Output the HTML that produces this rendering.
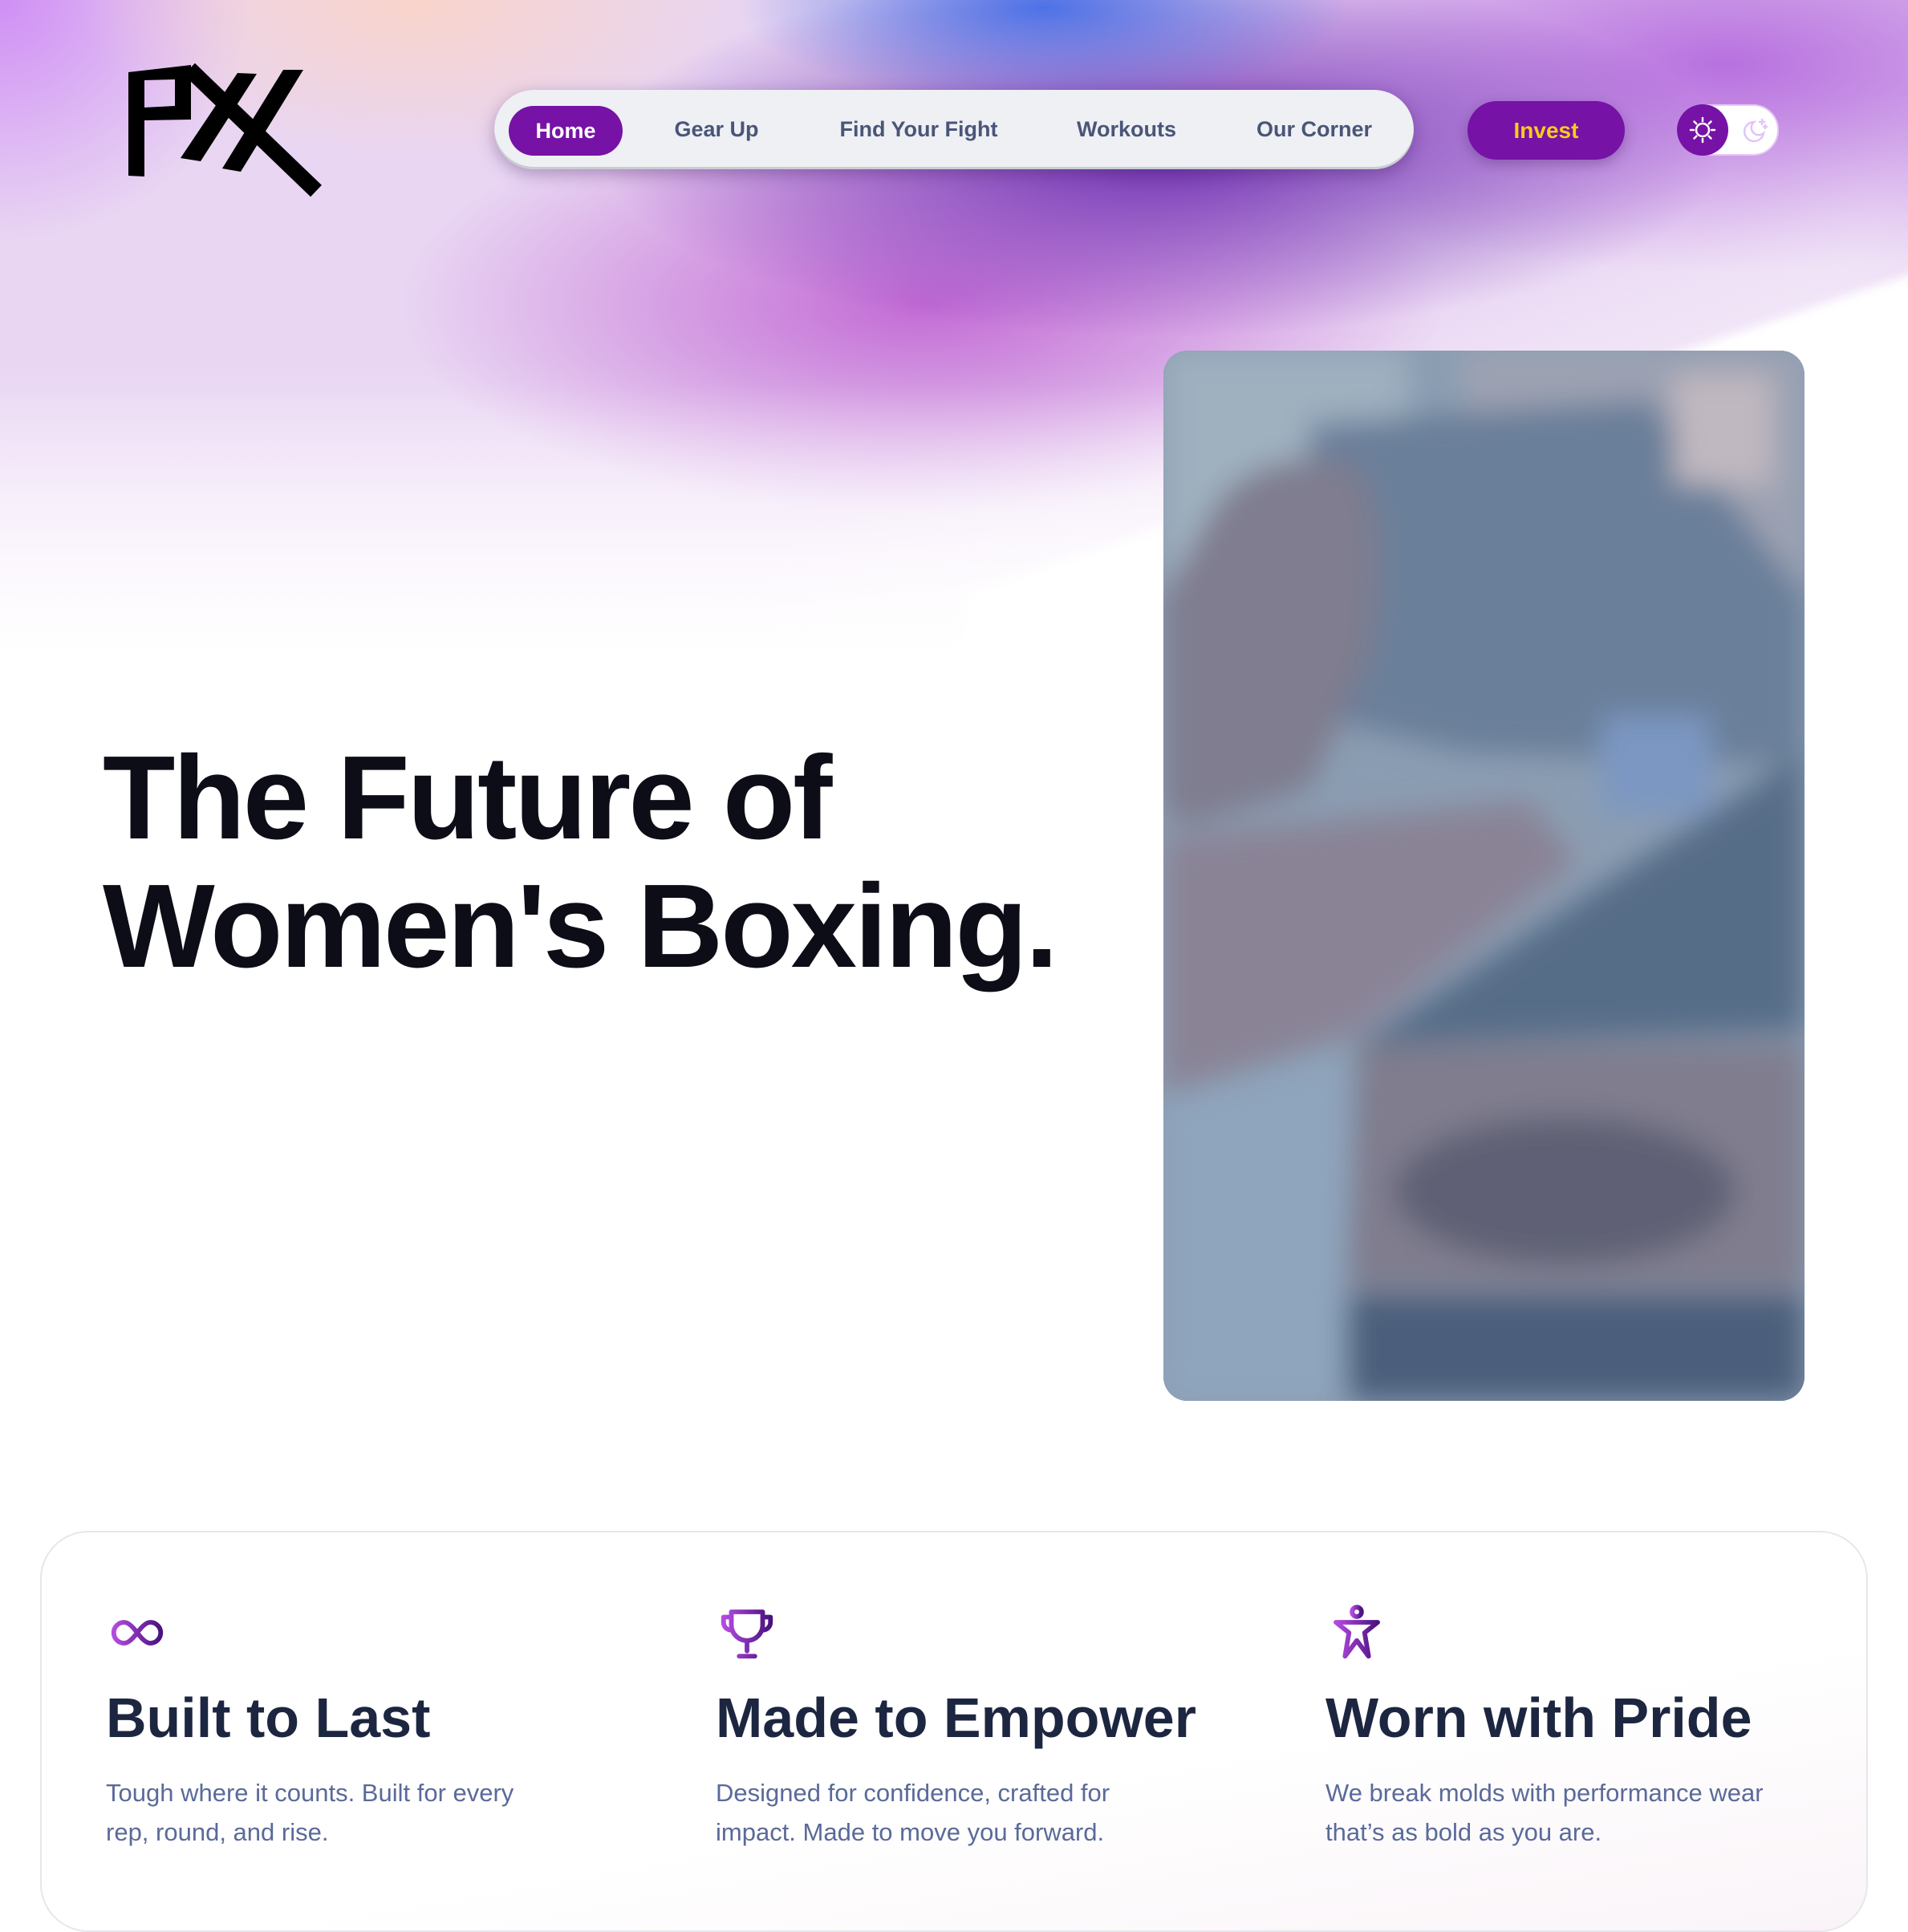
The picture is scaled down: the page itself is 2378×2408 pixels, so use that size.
<!DOCTYPE html>
<html><head><meta charset="utf-8">
<style>
*{margin:0;padding:0;box-sizing:border-box}
html,body{width:2378px;height:2332px;overflow:hidden;background:#fff;font-family:"Liberation Sans",sans-serif}
.bg{position:absolute;left:0;top:0;width:2378px;height:1000px;
background:
radial-gradient(ellipse 380px 120px at 1300px 10px, rgba(70,110,230,.95), rgba(70,110,230,0) 100%),
radial-gradient(ellipse 700px 230px at 1450px 190px, rgba(105,40,175,.95), rgba(105,40,175,0) 100%),
radial-gradient(ellipse 650px 260px at 1150px 380px, rgba(185,80,205,.8), rgba(185,80,205,0) 100%),
radial-gradient(ellipse 700px 260px at 2150px 80px, rgba(175,95,220,.85), rgba(175,95,220,0) 100%),
radial-gradient(ellipse 420px 200px at 520px 0px, rgba(250,212,200,.95), rgba(250,212,200,0) 100%),
radial-gradient(ellipse 320px 300px at 0px 0px, rgba(205,135,245,.9), rgba(205,135,245,0) 100%),
linear-gradient(180deg,#e8d5f2 0%,#e9d6f3 45%,#f4e8f9 70%,#fff 100%);}
.fade{position:absolute;left:0;top:480px;width:2378px;height:520px;background:linear-gradient(180deg,rgba(255,255,255,0),#fff 65%)}
.nav{position:absolute;left:616px;top:112px;width:1146px;height:99px;border-radius:50px;background:#eef0f4;box-shadow:0 6px 20px rgba(60,20,90,.35), inset 0 -3px 0 #c9ccd3;}
.nav span{position:absolute;top:0;line-height:99px;font-size:27px;font-weight:bold;color:#4a5578;transform:translateX(-50%);white-space:nowrap}
.home{position:absolute;left:634px;top:132px;width:142px;height:62px;border-radius:31px;background:#7612a6;color:#fff;font-size:27px;font-weight:bold;text-align:center;line-height:62px}
.invest{position:absolute;left:1829px;top:126px;width:196px;height:73px;border-radius:37px;background:#7612a6;color:#f8cc1a;font-size:28px;font-weight:bold;text-align:center;line-height:73px;box-shadow:0 6px 16px rgba(60,20,90,.3)}
.tog{position:absolute;left:2090px;top:130px;width:127px;height:64px;border-radius:32px;background:#fff;border:2px solid #e5c8f5}
.tog .k{position:absolute;left:-2px;top:-2px;width:64px;height:64px;border-radius:50%;background:#7612a6}
h1{position:absolute;left:128px;top:915px;font-size:148px;line-height:160px;font-weight:bold;color:#0c0d16;letter-spacing:-3px;white-space:nowrap}
.img{position:absolute;left:1450px;top:437px;width:799px;height:1309px;border-radius:30px;overflow:hidden;background:#8a9bb0}
.card{position:absolute;left:50px;top:1908px;width:2278px;height:500px;border-radius:60px;border:2px solid #e6e7ec;background:linear-gradient(170deg,#fff 60%,#faf4f8 100%)}
.col{position:absolute;top:0}
.col svg{position:absolute;top:86px}
.col h2{position:absolute;top:186px;font-size:70px;font-weight:bold;color:#1d2640;white-space:nowrap;line-height:90px}
.col p{position:absolute;top:300px;width:560px;font-size:31px;line-height:49px;color:#5a6a99}
</style></head><body>
<div class="bg"></div>
<svg style="position:absolute;left:0;top:0" width="2378" height="1000">
<defs><filter id="wb" x="-10%" y="-10%" width="120%" height="120%"><feGaussianBlur stdDeviation="6"/></filter>
<filter id="wb2"><feGaussianBlur stdDeviation="60"/></filter></defs>
<polygon points="2400,335 1200,740 1200,1000 2400,1000" fill="#fff" filter="url(#wb)"/>
<polygon points="2400,200 1100,700 900,1000 2400,1000" fill="#fff" opacity=".35" filter="url(#wb2)"/>
</svg>
<div class="fade"></div>

<svg style="position:absolute;left:0;top:0" width="420" height="260">
<path fill="#000" fill-rule="evenodd" d="M160 90 L238 81 L238 149 L180 150 L180 220 L160 219 Z M180 100 L218 99 L218 132 L180 134 Z"/>
<path d="M236 86 L394 238" stroke="#000" stroke-width="20"/>
<polygon points="225,197 250,201 320,92 296,91" fill="#000"/>
<polygon points="277,210 300,214 378,87 353,87" fill="#000"/>
</svg>

<div class="nav">
<span style="left:277px">Gear Up</span>
<span style="left:529px">Find Your Fight</span>
<span style="left:788px">Workouts</span>
<span style="left:1022px">Our Corner</span>
</div>
<div class="home">Home</div>
<div class="invest">Invest</div>
<div class="tog"><div class="k">
<svg width="64" height="64" viewBox="0 0 64 64"><g stroke="#fff" stroke-width="2.5" fill="none" stroke-linecap="round"><circle cx="32" cy="32" r="8"/><path d="M32 17v4M32 43v4M17 32h4M43 32h4M21.5 21.5l2.8 2.8M39.7 39.7l2.8 2.8M21.5 42.5l2.8-2.8M39.7 24.3l2.8-2.8"/></g></svg></div>
<svg style="position:absolute;left:64px;top:0" width="62" height="62" viewBox="0 0 62 62"><g stroke="#e3c4f5" stroke-width="2.5" fill="none" stroke-linecap="round"><path d="M30 20a12 12 0 1 0 12 14a9 9 0 0 1-12-14z"/><path d="M40 17v6M37 20h6M44 24v4M42 26h4"/></g></svg>
</div>

<h1>The Future of<br>Women's Boxing.</h1>

<div class="img">
<svg width="799" height="1309" viewBox="0 0 527 863" preserveAspectRatio="none">
<defs><filter id="b" x="-20%" y="-20%" width="140%" height="140%"><feGaussianBlur stdDeviation="12"/></filter></defs>
<rect width="527" height="863" fill="#8b9db2"/>
<g filter="url(#b)">
<rect x="0" y="0" width="200" height="300" fill="#9fb0bf"/>
<path d="M240 0 H527 V260 H300 Z" fill="#9da2b2"/>
<path d="M120 60 L400 40 L527 200 L527 340 L250 330 L120 300 Z" fill="#6a7f9a"/>
<path d="M30 150 Q60 80 150 90 Q190 110 170 250 L120 360 L20 390 L0 380 V200 Z" fill="#7f7d8f"/>
<path d="M0 400 L300 370 L340 420 L160 560 L0 610 Z" fill="#8a8396"/>
<path d="M160 570 L527 330 L527 560 L160 570 Z" fill="#566d88"/>
<path d="M160 570 H527 V770 H150 Z" fill="#7f7d8e"/>
<ellipse cx="330" cy="690" rx="140" ry="60" fill="#5e6075"/>
<path d="M150 775 H527 V863 H140 Z" fill="#4b5e7b"/>
<path d="M0 620 L150 580 L150 863 H0 Z" fill="#8fa5bd"/>
<rect x="360" y="300" width="90" height="80" fill="#7b97c2"/>
<rect x="420" y="20" width="80" height="90" fill="#c0b8c0"/>
</g>
</svg>
</div>

<div class="card">
<div class="col" style="left:80px">
<svg width="78" height="78" viewBox="0 0 24 24"><defs><linearGradient id="g" x1="0" x2="1"><stop offset="0" stop-color="#b44be0"/><stop offset="1" stop-color="#4a1280"/></linearGradient></defs><path fill="none" stroke="url(#g)" stroke-width="1.8" stroke-linecap="round" d="M12 12c-2-2.7-3.6-4-5-4a4 4 0 0 0 0 8c1.4 0 3-1.3 5-4zm0 0c2 2.7 3.6 4 5 4a4 4 0 0 0 0-8c-1.4 0-3 1.3-5 4z"/></svg>
<h2>Built to Last</h2>
<p>Tough where it counts. Built for every rep, round, and rise.</p>
</div>
<div class="col" style="left:840px">
<svg width="78" height="78" viewBox="0 0 24 24"><path fill="none" stroke="url(#g)" stroke-width="1.8" stroke-linecap="round" stroke-linejoin="round" d="M6 4h12v5a6 6 0 0 1-12 0zM6 6H3v2a3 3 0 0 0 3 3M18 6h3v2a3 3 0 0 1-3 3M12 15v4M9 21h6"/></svg>
<h2>Made to Empower</h2>
<p>Designed for confidence, crafted for impact. Made to move you forward.</p>
</div>
<div class="col" style="left:1600px">
<svg width="78" height="78" viewBox="0 0 24 24"><g fill="none" stroke="url(#g)" stroke-width="1.8" stroke-linecap="round" stroke-linejoin="round"><circle cx="12" cy="4" r="1.8"/><path d="M4 8h16l-5 4 1.5 9L12 15l-4.5 6L9 12z"/></g></svg>
<h2>Worn with Pride</h2>
<p>We break molds with performance wear that’s as bold as you are.</p>
</div>
</div>
</body></html>
